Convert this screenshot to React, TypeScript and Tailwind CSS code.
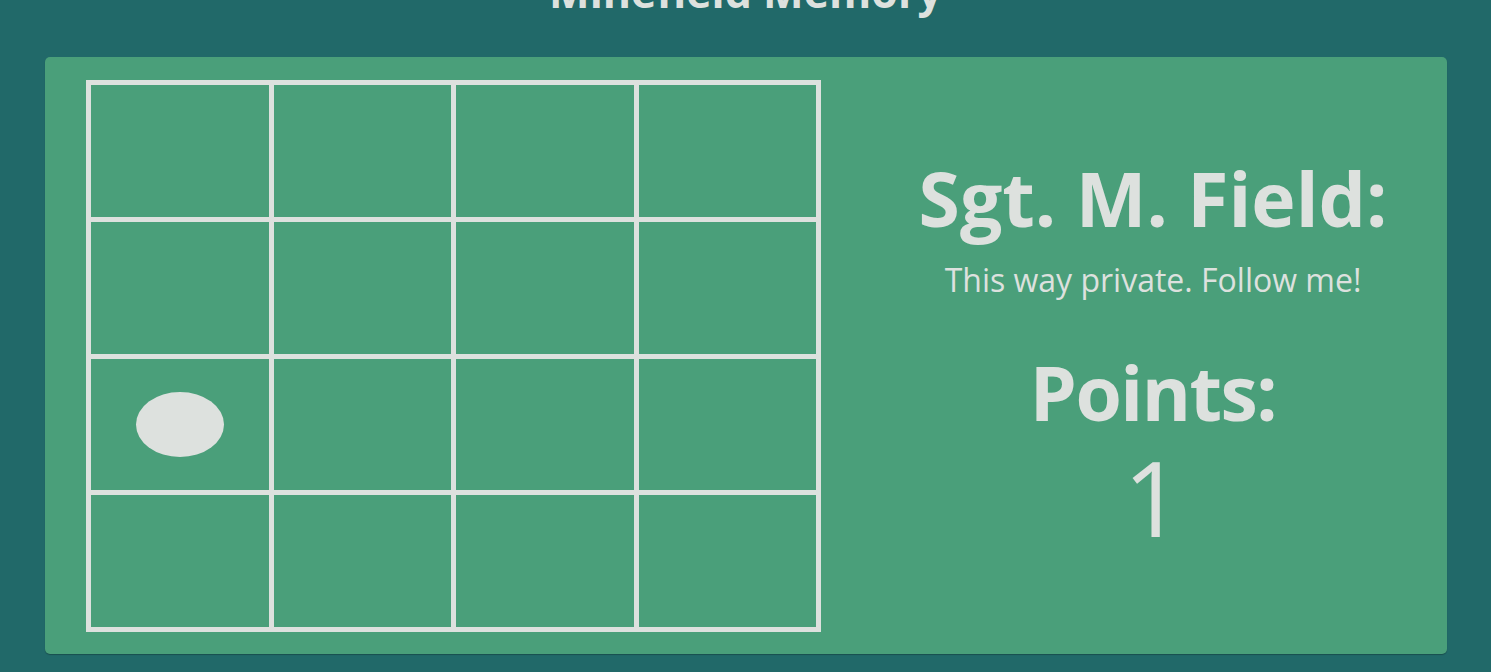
import React from "react";

// board: 4x4, ghost sits in row 3 col 1
const ROWS = 4;
const COLS = 4;
const guide = { row: 2, col: 0 };

const Cell = ({ active }: { active: boolean }) => {
  return (
    <div className="h-[131.75px] bg-[#4a9f7a] flex items-center justify-center">
      {active && <div className="w-[88px] h-[65px] rounded-[50%] bg-[#dde1de]"></div>}
    </div>
  );
};

const Board = () => {
  const cells = [];
  for (let r = 0; r < ROWS; r++) {
    for (let c = 0; c < COLS; c++) {
      cells.push(<Cell key={`${r}_${c}`} active={r === guide.row && c === guide.col} />);
    }
  }
  return (
    <div className="grid grid-cols-4 gap-[5px] p-[5px] bg-[#dde1de] w-[735px] shrink-0">
      {cells}
    </div>
  );
};

const Sidebar = ({ points }: { points: number }) => {
  return (
    <div className="flex-1 flex flex-col items-center justify-center pl-[38px] pb-[6px] text-[#dde1de]">
      <h2 className="text-[75px] leading-[80px] font-bold">Sgt. M. Field:</h2>
      <p className="text-[32px] leading-[40px] mt-[22px]">This way private. Follow me!</p>
      <h2 className="text-[75px] leading-[80px] font-bold tracking-[-1.5px] mt-[52px]">Points:</h2>
      <div className="text-[104px] leading-[104px] mt-[13px]">{points}</div>
    </div>
  );
};

export default function App() {
  return (
    <div
      className="min-h-screen bg-[#216969] overflow-hidden"
      style={{ fontFamily: '"Open Sans", "Noto Sans", sans-serif' }}
    >
      <h1 className="text-center text-[43px] leading-[43px] font-bold text-[#dde1de] -mt-[30px] mb-[44px]">
        Minefield Memory
      </h1>
      <div className="ml-[45px] mr-[44px] rounded-[5px] bg-[#4a9f7a] shadow-[0_1px_1px_rgba(0,0,0,0.25)] flex pl-[41px] pt-[23px] pb-[22px]">
        <Board />
        <Sidebar points={1} />
      </div>
    </div>
  );
}
